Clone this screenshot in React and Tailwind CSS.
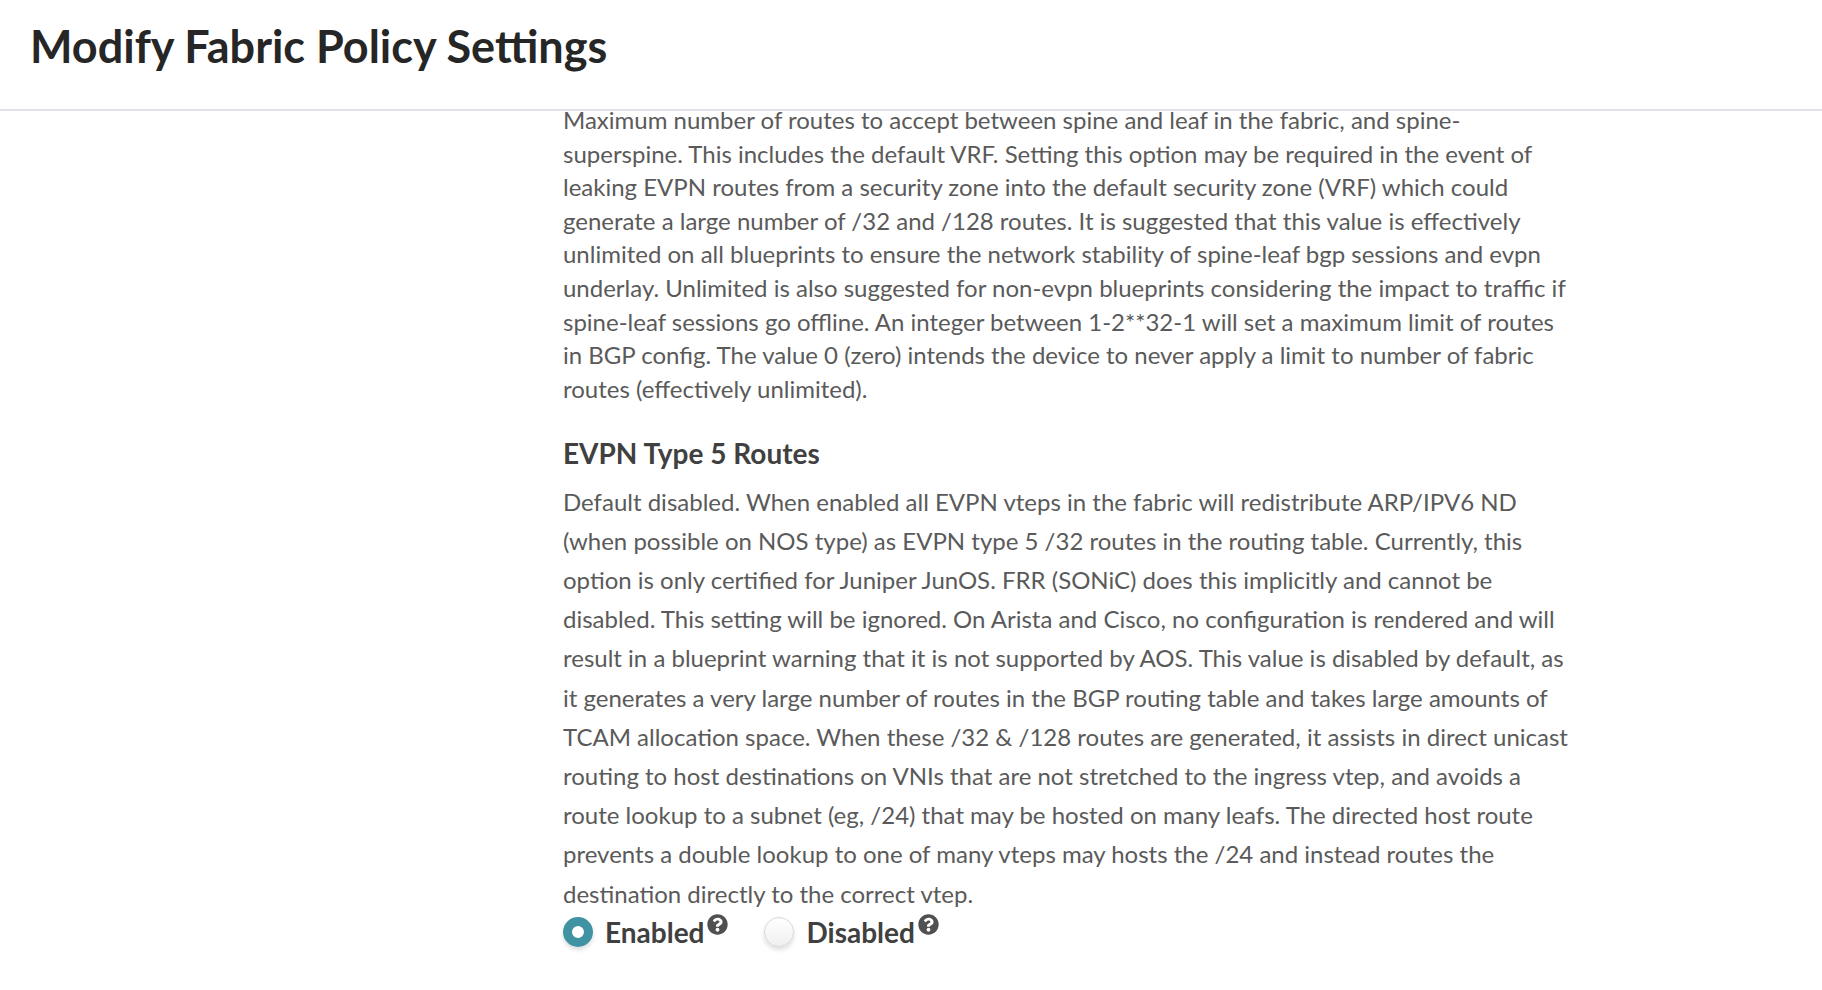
import { useState } from "react";
import { FaQuestionCircle } from "react-icons/fa";

function RadioOption({ value, label, checked, onChange }) {
  return (
    <div className="flex items-start">
      <label className="flex items-center gap-3 leading-8 font-bold text-[#404040]">
        <input
          type="radio"
          name="evpn-type-5"
          value={value}
          checked={checked}
          onChange={() => onChange(value)}
          className="size-[30px] appearance-none rounded-full border border-[#d9d9d9] bg-linear-to-b from-white to-[#f0f0f0] shadow-[0_3px_4px_rgba(34,36,58,0.15)] checked:border-[9px] checked:border-[#3f93a3] checked:from-white checked:to-white"
        />
        {label}
      </label>
      <button type="button" aria-label={`About ${label}`} className="-mt-0.5 ml-[3px]">
        <FaQuestionCircle className="size-[21px] text-[#505050]" />
      </button>
    </div>
  );
}

export default function App() {
  const [routes, setRoutes] = useState("enabled");
  return (
    <div className="overflow-hidden bg-white pb-10 font-['Lato',sans-serif] text-[#5a5a5a]">
      <header className="relative z-10 border-b-2 border-[#dfe2e7] bg-white px-[30px] pt-[18px] pb-[35px]">
        <h1 className="text-[45px] leading-[56px] font-bold text-[#262626]">
          Modify Fabric Policy Settings
        </h1>
      </header>
      <main className="-mt-2 ml-[30.9%] w-[1010px] max-w-[69%]">
        <p className="text-[24px] leading-[1.4]">
          Maximum number of routes to accept between spine and leaf in the fabric, and
          spine-superspine. This includes the default VRF. Setting this option may be required in
          the event of leaking EVPN routes from a security zone into the default security zone (VRF)
          which could generate a large number of /32 and /128 routes. It is suggested that this
          value is effectively unlimited on all blueprints to ensure the network stability of
          spine-leaf bgp sessions and evpn underlay. Unlimited is also suggested for non-evpn
          blueprints considering the impact to traffic if spine-leaf sessions go offline. An integer
          between 1-2**32-1 will set a maximum limit of routes in BGP config. The value 0 (zero)
          intends the device to never apply a limit to number of fabric routes (effectively
          unlimited).
        </p>
        <fieldset className="text-[28px] leading-[1.4em]">
          <legend className="pt-[29px] font-bold text-[#404040]">EVPN Type 5 Routes</legend>
          <p className="pt-2 text-[24px]">
            Default disabled. When enabled all EVPN vteps in the fabric will redistribute ARP/IPV6
            ND (when possible on NOS type) as EVPN type 5 /32 routes in the routing table.
            Currently, this option is only certified for Juniper JunOS. FRR (SONiC) does this
            implicitly and cannot be disabled. This setting will be ignored. On Arista and Cisco, no
            configuration is rendered and will result in a blueprint warning that it is not
            supported by AOS. This value is disabled by default, as it generates a very large number
            of routes in the BGP routing table and takes large amounts of TCAM allocation space.
            When these /32 &amp; /128 routes are generated, it assists in direct unicast routing to
            host destinations on VNIs that are not stretched to the ingress vtep, and avoids a route
            lookup to a subnet (eg, /24) that may be hosted on many leafs. The directed host route
            prevents a double lookup to one of many vteps may hosts the /24 and instead routes the
            destination directly to the correct vtep.
          </p>
          <div className="flex gap-9 pt-[3px]">
            <RadioOption
              value="enabled"
              label="Enabled"
              checked={routes === "enabled"}
              onChange={setRoutes}
            />
            <RadioOption
              value="disabled"
              label="Disabled"
              checked={routes === "disabled"}
              onChange={setRoutes}
            />
          </div>
        </fieldset>
      </main>
    </div>
  );
}
